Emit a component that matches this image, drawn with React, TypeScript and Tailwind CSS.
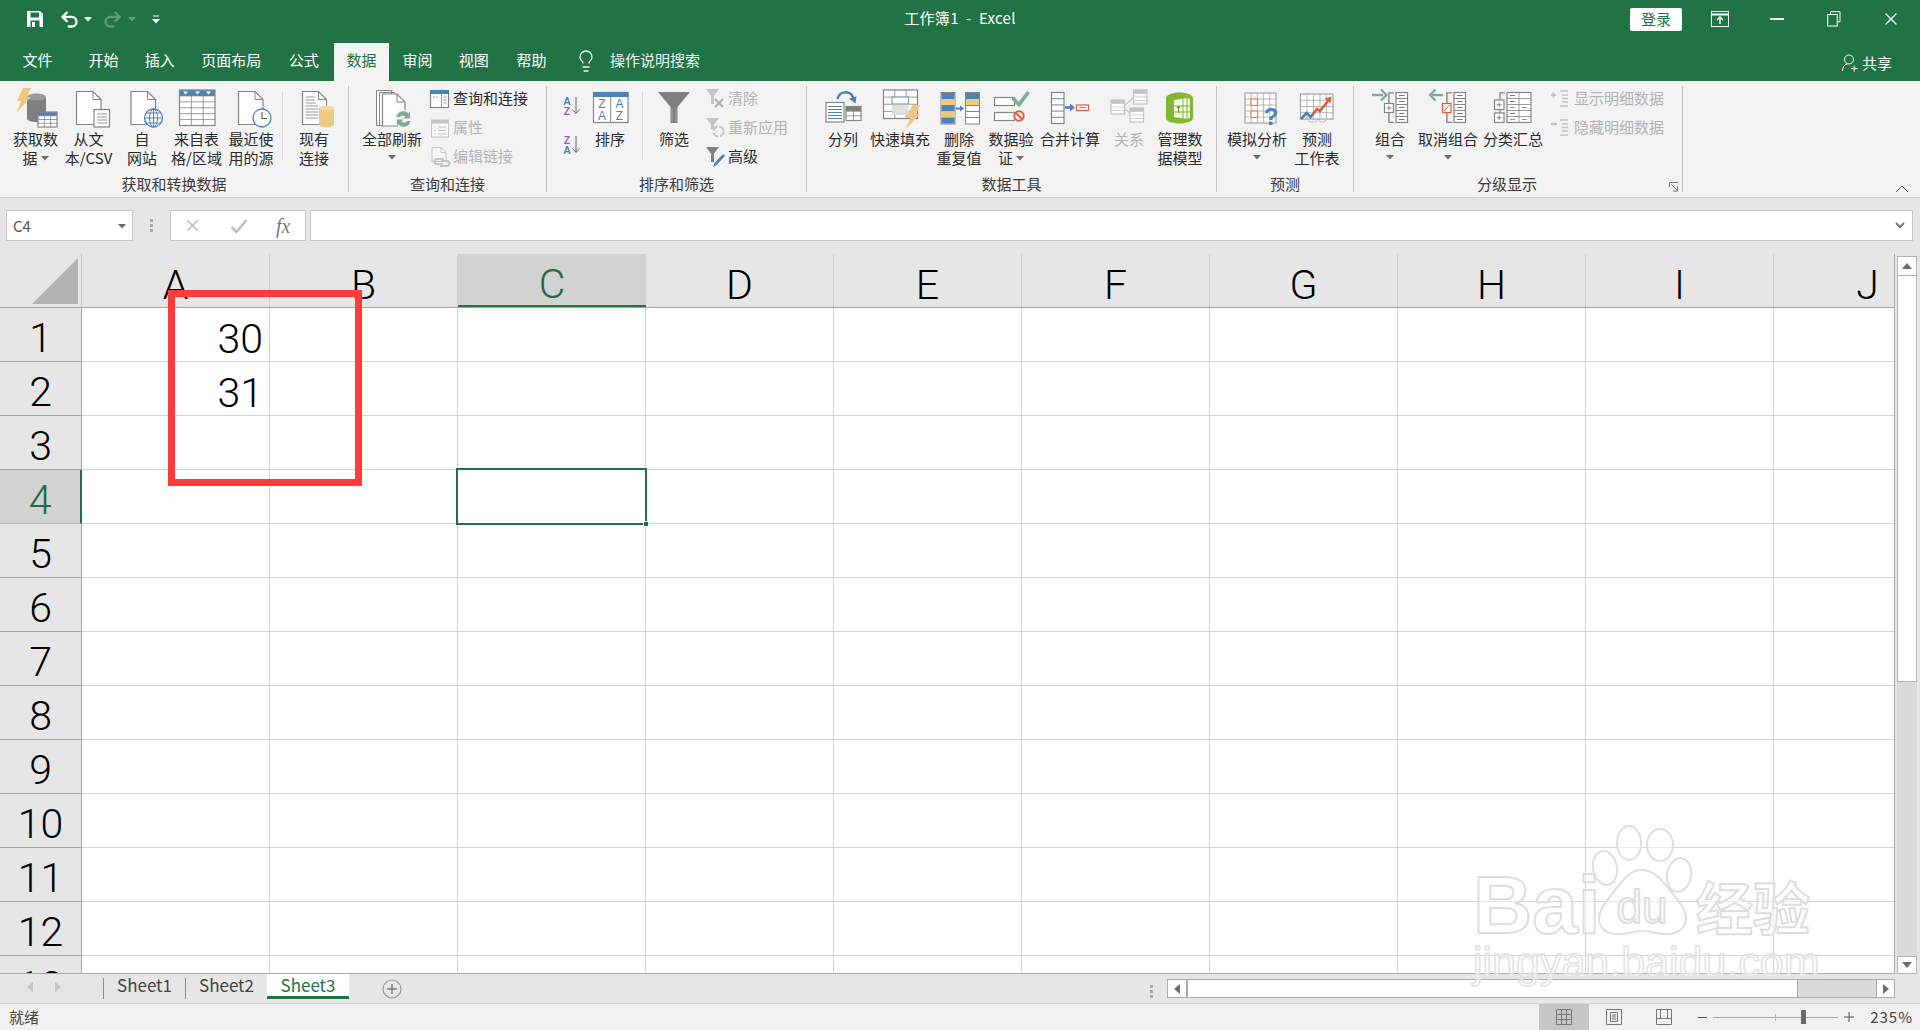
import type { ReactNode } from "react"
import { Lightbulb, Redo2, Undo2, X } from "lucide-react"

const LINE = "#858585"
const BLUE = "#4d82b8"
const GOLD = "#edc87e"
const TEAL = "#7cab96"
const RED = "#dd5f3f"
const PURPLE = "#9a5db5"
const OFF = "#c4c4c4"

const COLS = ["A", "B", "C", "D", "E", "F", "G", "H", "I", "J"]
const ROWS = [1, 2, 3, 4, 5, 6, 7, 8, 9, 10, 11, 12, 13]
const TABS = [
  { name: "文件", gap: "mr-[11px]" },
  { name: "开始", gap: "mr-[1.300px]" },
  { name: "插入", gap: "mr-[1.300px]" },
  { name: "页面布局", gap: "mr-[2.500px]" },
  { name: "公式", gap: "mr-[2.800px]" },
  { name: "数据", gap: "mr-[1px]" },
  { name: "审阅", gap: "mr-[1.300px]" },
  { name: "视图", gap: "mr-[2.600px]" },
  { name: "帮助", gap: "mr-0" },
]

/* ---------- small svg parts ---------- */

function Big({ children }: { children: ReactNode }) {
  return (
    <svg viewBox="0 0 60 44" className="h-[44px] w-[60px] flex-none" fill="none">
      {children}
    </svg>
  )
}

function Small({ children }: { children: ReactNode }) {
  return (
    <svg viewBox="0 0 22 22" className="h-[22px] w-[22px] flex-none" fill="none">
      {children}
    </svg>
  )
}

function Page({ x, y, w, h, c = LINE }: { x: number; y: number; w: number; h: number; c?: string }) {
  const f = 8
  return (
    <>
      <path d={`M${x} ${y}h${w - f}l${f} ${f}v${h - f}h-${w}z`} fill="#fff" stroke={c} strokeWidth="1.2" />
      <path d={`M${x + w - f} ${y}v${f}h${f}`} stroke={c} strokeWidth="1" />
    </>
  )
}

function Table({ x, y, w, h, cols, rows, c = LINE, head }: { x: number; y: number; w: number; h: number; cols: number; rows: number; c?: string; head?: string }) {
  const lines = []
  for (let i = 1; i < cols; i++) lines.push(<path key={"c" + i} d={`M${x + (w * i) / cols} ${y}v${h}`} stroke={c} strokeWidth=".8" />)
  for (let i = 1; i < rows; i++) lines.push(<path key={"r" + i} d={`M${x} ${y + (h * i) / rows}h${w}`} stroke={c} strokeWidth=".8" />)
  return (
    <>
      <rect x={x} y={y} width={w} height={h} fill="#fff" />
      {lines}
      {head && <rect x={x} y={y} width={w} height={h / rows} fill={head} />}
      <rect x={x} y={y} width={w} height={h} stroke={c} strokeWidth="1.2" />
    </>
  )
}

function Lines({ x, y, w, n, gap, c = "#9a9a9a" }: { x: number; y: number; w: number; n: number; gap: number; c?: string }) {
  return (
    <>
      {Array.from({ length: n }, (_, i) => (
        <path key={i} d={`M${x} ${y + i * gap}h${w}`} stroke={c} strokeWidth="1" />
      ))}
    </>
  )
}

function Bolt({ x, y, s = 1 }: { x: number; y: number; s?: number }) {
  return <path transform={`translate(${x} ${y}) scale(${s})`} d="M6 0h8L10 9h4L0 24l4-11H0z" fill={GOLD} />
}

function ListCol({ x, y }: { x: number; y: number }) {
  return (
    <>
      <rect x={x} y={y} width="11.5" height="30" fill="#fff" stroke={LINE} strokeWidth="1.2" />
      {[1, 2, 3, 4].map((i) => <path key={i} d={`M${x} ${y + i * 6}h11.5`} stroke={LINE} strokeWidth="1" />)}
      {[0, 1, 2, 3, 4].map((i) => <path key={i} d={`M${x + 3} ${y + 3 + i * 6}h5.5`} stroke={BLUE} strokeWidth="1" />)}
    </>
  )
}

/* ---------- big ribbon icons ---------- */

const IconGetData = (
  <Big>
    <path d="M21 11v21c0 2.500 4 4 9.500 4s9.500-1.500 9.500-4V11z" fill="#7f7f7f" />
    <ellipse cx="30.500" cy="11" rx="9.500" ry="3.500" fill="#9a9a9a" />
    <Bolt x={11} y={2} />
    <Table x={32} y={26} w={19} h={15} cols={3} rows={4} head={BLUE} />
  </Big>
)
const IconFromText = (
  <Big>
    <Page x={17.500} y={5.500} w={24.500} h={33} />
    <rect x="35" y="23.500" width="15.500" height="17.500" fill="#fff" stroke={LINE} strokeWidth="1.2" />
    <Lines x={38} y={28} w={10} n={4} gap={3} />
  </Big>
)
const IconWeb = (
  <Big>
    <Page x={19} y={5.500} w={24.500} h={33} />
    <circle cx="41.500" cy="32" r="9" fill="#fff" stroke={BLUE} strokeWidth="1.300" />
    <ellipse cx="41.500" cy="32" rx="4" ry="9" stroke={BLUE} />
    <path d="M32.500 32h18M34 27h15M34 37h15M41.500 23v18" stroke={BLUE} />
  </Big>
)
const IconFromTable = (
  <Big>
    <Table x={12.500} y={4} w={35.500} h={35.500} cols={3} rows={6} head={BLUE} />
    <path d="M16 5.500h5l-2.500 3zM28 5.500h5l-2.500 3zM39 5.500h5l-2.500 3z" fill="#fff" />
  </Big>
)
const IconRecent = (
  <Big>
    <Page x={17.500} y={5.500} w={24.500} h={33} />
    <circle cx="41" cy="32" r="9" fill="#fff" stroke={BLUE} strokeWidth="1.300" />
    <path d="M41 26v6.500h5" stroke="#555" strokeWidth="1.100" />
  </Big>
)
const IconExisting = (
  <Big>
    <Page x={18.500} y={5.500} w={24} h={33} />
    <Lines x={21.500} y={11} w={10} n={3} gap={3} />
    <Lines x={21.500} y={20} w={13} n={5} gap={3} />
    <path d="M35 22v16c0 2 3 3.200 7.500 3.200S50 40 50 38V22z" fill={GOLD} />
    <ellipse cx="42.500" cy="22" rx="7.500" ry="2.500" fill="#f3d9a4" />
  </Big>
)
const IconRefresh = (
  <Big>
    <path d="M14.500 4.500h15v35h-15zM17.500 6.500h15v33h-15z" fill="#fff" stroke={LINE} />
    <Page x={20.500} y={8} w={22.500} h={32} />
    <circle cx="41.500" cy="33" r="9.500" fill="#f3f3f3" />
    <path d="M34.500 31a7 7 0 0 1 12-3.500l1.500-2v7h-6.500l2-2a4.200 4.200 0 0 0-6 .5zM48.500 35a7 7 0 0 1-12 3.500l-1.500 2v-7h6.500l-2 2a4.200 4.200 0 0 0 6-.5z" fill={TEAL} />
  </Big>
)
const IconSort = (
  <Big>
    <rect x="13.500" y="6.500" width="34.500" height="30" fill="#fff" stroke={LINE} strokeWidth="1.200" />
    <rect x="13" y="6" width="35.500" height="5" fill={BLUE} />
    <path d="M30.700 11v25" stroke={LINE} />
    <text x="22" y="22" textAnchor="middle" fontSize="12" fontFamily="'Liberation Sans'" fill={PURPLE}>Z</text>
    <text x="22" y="34" textAnchor="middle" fontSize="12" fontFamily="'Liberation Sans'" fill={BLUE}>A</text>
    <text x="39.500" y="22" textAnchor="middle" fontSize="12" fontFamily="'Liberation Sans'" fill={BLUE}>A</text>
    <text x="39.500" y="34" textAnchor="middle" fontSize="12" fontFamily="'Liberation Sans'" fill={PURPLE}>Z</text>
  </Big>
)
const IconFilter = (
  <Big>
    <path d="M14 6h32L33.500 21v16h-7V21z" fill="#7f7f7f" />
    <path d="M28 22v14M32 22v14" stroke="#a5a5a5" />
  </Big>
)
const IconColumns = (
  <Big>
    <rect x="13" y="16.500" width="18" height="19.500" fill="#fff" stroke={LINE} strokeWidth="1.200" />
    <Lines x={15} y={20.500} w={14} n={5} gap={3} c={BLUE} />
    <Table x={33} y={20.500} w={15} h={14} cols={2} rows={3} head="#7f7f7f" />
    <path d="M24.500 13a8.500 8.500 0 0 1 14-4.500l2 3.500" stroke={BLUE} strokeWidth="2.400" />
    <path d="M36 12.500l6.500 5 1-7z" fill={BLUE} />
  </Big>
)
const IconFlash = (
  <Big>
    <Table x={13.500} y={4} w={34} h={28.500} cols={3} rows={4} />
    <rect x="22" y="18" width="16.500" height="11" fill="#dfdfdf" />
    <rect x="22" y="11" width="16.500" height="7" fill="#fff" stroke={TEAL} strokeWidth="1.200" />
    <Bolt x={36} y={19} s={1} />
  </Big>
)
const IconDuplicates = (
  <Big>
    <rect x="12" y="6.500" width="14" height="31.500" fill="#fff" stroke={LINE} />
    <rect x="12.500" y="7" width="13" height="6" fill={BLUE} />
    <rect x="12.500" y="13" width="13" height="6" fill={GOLD} />
    <rect x="12.500" y="19" width="13" height="6.500" fill={BLUE} />
    <rect x="12.500" y="25.500" width="13" height="6" fill={GOLD} />
    <rect x="12.500" y="31.500" width="13" height="6" fill={BLUE} />
    <rect x="36.500" y="6.500" width="14" height="31.500" fill="#fff" stroke={LINE} />
    <rect x="37" y="7" width="13" height="6" fill={BLUE} />
    <rect x="37" y="13" width="13" height="6" fill={GOLD} />
    <path d="M36.500 19.500h14M36.500 25.500h14M36.500 31.500h14" stroke={LINE} />
    <path d="M27 22.500h5" stroke={BLUE} strokeWidth="2" />
    <path d="M31 19.500l4 3-4 3z" fill={BLUE} />
  </Big>
)
const IconValidate = (
  <Big>
    <rect x="13.500" y="11.500" width="20" height="8" fill="#fff" stroke={LINE} strokeWidth="1.200" />
    <rect x="13.500" y="26.500" width="20" height="8" fill="#fff" stroke={LINE} strokeWidth="1.200" />
    <path d="M31.500 12l6.500 6.500L47.500 6" stroke={TEAL} strokeWidth="3.600" />
    <circle cx="38" cy="30" r="4.700" fill="#fff" stroke={RED} strokeWidth="2" />
    <path d="M35 27l6 6" stroke={RED} strokeWidth="2" />
  </Big>
)
const IconConsolidate = (
  <Big>
    <rect x="11.500" y="6.500" width="12.500" height="31" fill="#fff" stroke={LINE} strokeWidth="1.200" />
    <path d="M11.500 12.700h12.500M11.500 18.900h12.500M11.500 25.100h12.500M11.500 31.300h12.500" stroke={LINE} />
    <path d="M25 21.500h6" stroke={BLUE} strokeWidth="2.600" />
    <path d="M30 17.500l5 4-5 4z" fill={BLUE} />
    <rect x="36.500" y="19" width="12" height="5.500" fill="#fff" stroke={RED} strokeWidth="1.200" />
    <path d="M39 21.700h7" stroke={RED} />
  </Big>
)
const IconRelations = (
  <Big>
    <path d="M25 20l10-9M25 22l8 7" stroke={OFF} strokeWidth="1.200" />
    <Table x={12} y={14} w={13.500} h={14} cols={1} rows={4} c={OFF} head={OFF} />
    <Table x={34.500} y={4} w={13.500} h={14} cols={1} rows={4} c={OFF} head={OFF} />
    <Table x={31} y={22} w={13.500} h={14} cols={1} rows={4} c={OFF} head={OFF} />
  </Big>
)
const IconModel = (
  <Big>
    <path d="M16 12c0-3 6-5.500 13.500-5.500S43 9 43 12v20c0 3-6 5.500-13.500 5.500S16 35 16 32z" fill="#7fb82f" />
    <path d="M24 14l13-2 3 1v19l-3 1-13-2z" fill="#fff" opacity=".9" />
    <path d="M33 12.500V33M37 12v21M24 20h16M24 26h16" stroke="#7fb82f" strokeWidth="1" />
    <path d="M28.500 27v-7l-1.500 2M28.500 20l1.500 2" stroke="#5f8d20" strokeWidth="1" />
  </Big>
)
const IconWhatIf = (
  <Big>
    <Table x={18} y={7} w={31} h={30} cols={5} rows={5} c="#a3a3a3" />
    <rect x="24" y="13" width="6.500" height="6.500" fill="#fff" stroke="#e08a3c" strokeWidth="1.200" />
    <rect x="24" y="25" width="6.500" height="6.500" fill="#fff" stroke="#e08a3c" strokeWidth="1.200" />
    <text x="44" y="39" textAnchor="middle" fontSize="24" fontWeight="700" fontFamily="'Liberation Sans'" fill={BLUE}>?</text>
  </Big>
)
const IconForecast = (
  <Big>
    <Table x={13.500} y={8} w={32.500} h={25} cols={5} rows={4} c="#a3a3a3" />
    <path d="M14 33l5.500-6 4 4 3-3.500" stroke={BLUE} strokeWidth="2.600" />
    <path d="M26 28l4-5 3 2 8-10" stroke={RED} strokeWidth="2.600" />
    <path d="M37.500 12.500l7-2-1 7z" fill={RED} />
    <path d="M20 33l3 3h6l2-3M31 33l2 3h5l1-3" stroke="#a3a3a3" strokeWidth=".8" strokeDasharray="2 1" />
  </Big>
)
const IconGroup = (
  <Big>
    <path d="M12 9h11" stroke={TEAL} strokeWidth="2.400" />
    <path d="M21 3.500l5.500 5.500-5.500 5.500" stroke={TEAL} strokeWidth="2.200" />
    <path d="M34 6.800h-5v29.500h5M28.800 6.800v10.500M28.800 26.500v9.800" stroke={LINE} strokeWidth="1.200" />
    <rect x="24.500" y="17.500" width="9" height="9" fill="#fff" stroke={LINE} strokeWidth="1.200" />
    <path d="M26.500 22h5M29 19.500v5" stroke={LINE} />
    <ListCol x={36} y={6.500} />
  </Big>
)
const IconUngroup = (
  <Big>
    <path d="M14 9h11" stroke={TEAL} strokeWidth="2.400" />
    <path d="M17.500 3.500L12 9l5.500 5.500" stroke={TEAL} strokeWidth="2.200" />
    <path d="M34 6.800h-5v29.500h5M28.800 6.800v10.500M28.800 26.500v9.800" stroke={LINE} strokeWidth="1.200" />
    <rect x="24.500" y="17.500" width="8.500" height="9" fill="#fff" stroke={RED} strokeWidth="1.200" />
    <path d="M26 25l5.500-6" stroke={RED} />
    <ListCol x={36} y={6.500} />
  </Big>
)
const IconSubtotal = (
  <Big>
    <path d="M22 6.800h-5v7M17 23.500v3.500" stroke={LINE} strokeWidth="1.200" />
    <rect x="11.500" y="14" width="9.500" height="9.500" fill="#fff" stroke={LINE} strokeWidth="1.200" />
    <rect x="11.500" y="27" width="9.500" height="9.500" fill="#fff" stroke={LINE} strokeWidth="1.200" />
    <path d="M13.700 18.700h5M16.200 16.200v5M13.700 31.700h5M16.200 29.200v5" stroke={LINE} />
    <Table x={24} y={6.500} w={24} h={30} cols={2} rows={5} />
    <path d="M27 9.500h5M27 15.500h5M27 27.500h5" stroke={BLUE} />
    <path d="M27 21.500h5M39 21.500h5M27 33.500h5M39 33.500h5" stroke="#e08a3c" />
  </Big>
)

/* ---------- small ribbon icons ---------- */

const SmallQuery = (
  <Small>
    <rect x="1.500" y="2.500" width="18" height="17" fill="#fff" stroke={LINE} strokeWidth="1.200" />
    <rect x="1" y="2" width="19" height="4" fill={BLUE} />
    <path d="M12.500 6v13M14.500 9h3M14.500 12h3M14.500 15h3M4 9h2M7 9h2" stroke="#9a9a9a" />
  </Small>
)
const SmallProps = (
  <Small>
    <rect x="2.500" y="3" width="17" height="17" fill="#f7f7f7" stroke={OFF} />
    <rect x="2.500" y="3" width="17" height="3.500" fill={OFF} />
    <path d="M9 10h8M9 13.500h8M9 17h8M5 10h1.500M5 13.500h1.500M5 17h1.500" stroke={OFF} />
  </Small>
)
const SmallLinks = (
  <Small>
    <path d="M3 1.500h9l5 5v9H3z" fill="#f7f7f7" stroke={OFF} />
    <path d="M12 1.500v5h5" stroke={OFF} />
    <path d="M12 16h6a2.500 2.500 0 0 1 0 5h-7M14 19h-6a2.500 2.500 0 0 1 0-5h7" stroke={OFF} strokeWidth="2" transform="translate(0 -1)" />
  </Small>
)
const SmallClear = (
  <Small>
    <path d="M2 1h13l-5 6.500V16h-3V7.500z" fill={OFF} />
    <path d="M11 11l8 8M19 11l-8 8" stroke="#b0b0b0" strokeWidth="2.200" />
  </Small>
)
const SmallReapply = (
  <Small>
    <path d="M2 1h13l-5 6.500V12H7V7.500z" fill={OFF} />
    <circle cx="14.500" cy="14.500" r="5" stroke={OFF} strokeWidth="2" strokeDasharray="6 2" />
  </Small>
)
const SmallAdvanced = (
  <Small>
    <path d="M2 1h13l-5 6.500V16H7V7.500z" fill="#7f7f7f" />
    <path d="M9 21l1.500-4L19 8l2 2-8.500 9z" fill={BLUE} />
  </Small>
)
const SmallShow = (
  <Small>
    <path d="M1 7h5M3.500 4.500v5" stroke={OFF} strokeWidth="2" />
    <path d="M10 3h8M12 7h6M12 10.500h6M12 14h6M10 18h8" stroke={OFF} strokeWidth="1.300" />
  </Small>
)
const SmallHide = (
  <Small>
    <path d="M1 7h6" stroke={OFF} strokeWidth="2.400" />
    <path d="M10 3h8M12 7h6M12 10.500h6M12 14h6M10 18h8" stroke={OFF} strokeWidth="1.300" />
  </Small>
)

/* ---------- ribbon blocks ---------- */

function Caret({ className = "" }: { className?: string }) {
  return (
    <svg viewBox="0 0 8 5" className={`inline-block h-[5px] w-[8px] ${className}`}>
      <path d="M0 0h8L4 4.500z" fill="#6e6e6e" />
    </svg>
  )
}

function RibbonBtn({ w, icon, lines, caret, off }: { w: string; icon: ReactNode; lines: string[]; caret?: boolean; off?: boolean }) {
  return (
    <div className={`flex flex-none flex-col items-center whitespace-nowrap text-[15px] leading-[19px] ${w} ${off ? "text-[#b4b4b4]" : "text-[#2b2b2b]"}`}>
      {icon}
      <div className="-mt-[1px] flex flex-col items-center">
        {lines.map((l, i) => (
          <div key={l} className="h-[19px] text-center">
            {l}
            {caret && i === lines.length - 1 && lines.length > 1 && <Caret className="mb-[2px] ml-[3px]" />}
          </div>
        ))}
        {caret && lines.length === 1 && <div className="flex h-[19px] items-center"><Caret /></div>}
      </div>
    </div>
  )
}

function SmallBtn({ icon, label, off }: { icon: ReactNode; label: string; off?: boolean }) {
  return (
    <div className={`flex h-[29px] items-center gap-[2px] whitespace-nowrap text-[15px] ${off ? "text-[#b4b4b4]" : "text-[#2b2b2b]"}`}>
      {icon}
      <span>{label}</span>
    </div>
  )
}

function Group({ w, label, labelPad = "", children }: { w: string; label: string; labelPad?: string; children: ReactNode }) {
  return (
    <div className={`flex h-[106px] flex-none flex-col border-r border-[#c6c6c6] ${w}`}>
      <div className="flex h-[89px] flex-none items-start">{children}</div>
      <div className={`h-[18px] flex-none whitespace-nowrap text-center text-[15px] leading-[18px] text-[#3c3c3c] ${labelPad}`}>{label}</div>
    </div>
  )
}

function VSep({ className }: { className: string }) {
  return <div className={`h-[68px] w-px flex-none bg-[#d4d4d4] ${className}`} />
}

function Ribbon() {
  return (
    <div className="relative flex h-[117px] border-b border-[#d4d4d4] bg-[#f3f3f3] pt-[5px]">
      <Group w="w-[349px]" label="获取和转换数据">
        <div className="w-[9px] flex-none" />
        <RibbonBtn w="w-[53px]" icon={IconGetData} lines={["获取数", "据"]} caret />
        <RibbonBtn w="w-[53px]" icon={IconFromText} lines={["从文", "本/CSV"]} />
        <RibbonBtn w="w-[54px]" icon={IconWeb} lines={["自", "网站"]} />
        <RibbonBtn w="w-[55px]" icon={IconFromTable} lines={["来自表", "格/区域"]} />
        <RibbonBtn w="w-[54px]" icon={IconRecent} lines={["最近使", "用的源"]} />
        <VSep className="ml-[4px] mt-[6px]" />
        <RibbonBtn w="w-[56px] ml-[3px]" icon={IconExisting} lines={["现有", "连接"]} />
      </Group>

      <Group w="w-[198px]" label="查询和连接">
        <div className="w-[13px] flex-none" />
        <RibbonBtn w="w-[60px]" icon={IconRefresh} lines={["全部刷新"]} caret />
        <div className="ml-[7px] flex -mt-[2px] flex-col">
          <SmallBtn icon={SmallQuery} label="查询和连接" />
          <SmallBtn icon={SmallProps} label="属性" off />
          <SmallBtn icon={SmallLinks} label="编辑链接" off />
        </div>
      </Group>

      <Group w="w-[260px]" label="排序和筛选">
        <div className="ml-[12px] flex w-[24px] flex-none flex-col items-center pt-[10px]">
          <svg viewBox="0 0 20 20" className="h-[20px] w-[20px]">
            <text x="6" y="9" textAnchor="middle" fontSize="10.500" fontWeight="700" fontFamily="'Liberation Sans'" fill={BLUE}>A</text>
            <text x="6" y="18.500" textAnchor="middle" fontSize="10.500" fontWeight="700" fontFamily="'Liberation Sans'" fill={PURPLE}>Z</text>
            <path d="M15 1v16M11.500 13.500L15 17.500l3.500-4" stroke="#666" fill="none" />
          </svg>
          <svg viewBox="0 0 20 20" className="mt-[19px] h-[20px] w-[20px]">
            <text x="6" y="9" textAnchor="middle" fontSize="10.500" fontWeight="700" fontFamily="'Liberation Sans'" fill={PURPLE}>Z</text>
            <text x="6" y="18.500" textAnchor="middle" fontSize="10.500" fontWeight="700" fontFamily="'Liberation Sans'" fill={BLUE}>A</text>
            <path d="M15 1v16M11.500 13.500L15 17.500l3.500-4" stroke="#666" fill="none" />
          </svg>
        </div>
        <RibbonBtn w="w-[40px] ml-[7px]" icon={IconSort} lines={["排序"]} />
        <VSep className="ml-[12px] mt-[6px]" />
        <RibbonBtn w="w-[40px] ml-[11px]" icon={IconFilter} lines={["筛选"]} />
        <div className="ml-[10px] flex -mt-[2px] flex-col">
          <SmallBtn icon={SmallClear} label="清除" off />
          <SmallBtn icon={SmallReapply} label="重新应用" off />
          <SmallBtn icon={SmallAdvanced} label="高级" />
        </div>
      </Group>

      <Group w="w-[410px]" label="数据工具">
        <div className="w-[12px] flex-none" />
        <RibbonBtn w="w-[48px]" icon={IconColumns} lines={["分列"]} />
        <RibbonBtn w="w-[66px]" icon={IconFlash} lines={["快速填充"]} />
        <RibbonBtn w="w-[52px]" icon={IconDuplicates} lines={["删除", "重复值"]} />
        <RibbonBtn w="w-[52px]" icon={IconValidate} lines={["数据验", "证"]} caret />
        <RibbonBtn w="w-[66px]" icon={IconConsolidate} lines={["合并计算"]} />
        <RibbonBtn w="w-[52px]" icon={IconRelations} lines={["关系"]} off />
        <RibbonBtn w="w-[50px]" icon={IconModel} lines={["管理数", "据模型"]} />
      </Group>

      <Group w="w-[137px]" label="预测">
        <div className="w-[10px] flex-none" />
        <RibbonBtn w="w-[60px]" icon={IconWhatIf} lines={["模拟分析"]} caret />
        <RibbonBtn w="w-[60px]" icon={IconForecast} lines={["预测", "工作表"]} />
      </Group>

      <Group w="w-[329px]" label="分级显示" labelPad="pr-[22px]">
        <div className="w-[7px] flex-none" />
        <RibbonBtn w="w-[58px]" icon={IconGroup} lines={["组合"]} caret />
        <RibbonBtn w="w-[58px]" icon={IconUngroup} lines={["取消组合"]} caret />
        <RibbonBtn w="w-[72px]" icon={IconSubtotal} lines={["分类汇总"]} />
        <div className="ml-[1px] flex -mt-[2px] flex-col">
          <SmallBtn icon={SmallShow} label="显示明细数据" off />
          <SmallBtn icon={SmallHide} label="隐藏明细数据" off />
        </div>
      </Group>

      <svg viewBox="0 0 10 10" className="absolute left-[1669px] top-[101px] h-[10px] w-[10px]" fill="none">
        <path d="M.5 5V.500H9M2.500 2.500l5.500 5.500M8.500 4v5H4" stroke="#777" />
      </svg>
      <svg viewBox="0 0 14 8" className="absolute left-[1895px] top-[104px] h-[8px] w-[14px]" fill="none">
        <path d="M1 7l6-6 6 6" stroke="#666" />
      </svg>
    </div>
  )
}

function TitleBar() {
  return (
    <div className="flex h-[43px] items-start bg-[#217346] text-white">
      <div className="flex h-[38px] flex-1 items-center">
        <div className="w-[26px] flex-none" />
        <svg viewBox="0 0 18 18" className="h-[18px] w-[18px]">
          <path d="M1 1h13l3 3v13H1z" fill="#fff" />
          <rect x="4.500" y="2.500" width="8.500" height="5" fill="#217346" />
          <rect x="4.500" y="10.500" width="9" height="6.500" fill="#217346" />
          <rect x="6" y="12" width="3" height="5" fill="#fff" />
        </svg>
        <Undo2 size={21} strokeWidth={2.6} className="ml-[15px]" />
        <Caret className="ml-[4px] [&_path]:fill-white" />
        <Redo2 size={21} strokeWidth={2.6} className="ml-[10px] text-[#5f9a7e]" />
        <Caret className="ml-[5px] [&_path]:fill-[#5f9a7e]" />
        <svg viewBox="0 0 8 9" className="ml-[16px] h-[9px] w-[8px]">
          <path d="M1 1h6" stroke="#fff" />
          <path d="M0 4h8L4 8.500z" fill="#fff" />
        </svg>
      </div>
      <div className="flex h-[36px] items-center text-[15px] tracking-[0.3px]">工作簿1&nbsp;&nbsp;-&nbsp;&nbsp;Excel</div>
      <div className="flex h-[38px] flex-1 items-center justify-end">
        <div className="flex h-[23px] w-[52px] flex-none items-center justify-center rounded-[2px] bg-white text-[15px] text-[#217346]">登录</div>
        <svg viewBox="0 0 18 16" className="ml-[29px] h-[16px] w-[18px] flex-none" fill="none">
          <rect x=".5" y=".5" width="17" height="15" stroke="#fff" />
          <path d="M.5 3.500h17" stroke="#fff" strokeWidth="2" />
          <path d="M9 13V6.500M6 9l3-3 3 3" stroke="#fff" strokeWidth="1.400" />
        </svg>
        <div className="ml-[41px] h-[1.500px] w-[14px] flex-none bg-white" />
        <svg viewBox="0 0 14 16" className="ml-[43px] h-[16px] w-[14px] flex-none" fill="none">
          <path d="M3.500 3V.700H13v10h-3" stroke="#fff" />
          <rect x=".7" y="3.500" width="9.500" height="11.500" stroke="#fff" />
        </svg>
        <X size={20} strokeWidth={1.5} className="ml-[40px] mr-[19px] flex-none" />
      </div>
    </div>
  )
}

function TabRow() {
  return (
    <div className="flex h-[38px] items-stretch bg-[#217346] text-[15px] text-white">
      <div className="w-[10px] flex-none" />
      {TABS.map((t) => (
        <div
          key={t.name}
          className={`flex items-center justify-center px-[12.500px] pb-[4px] ${t.gap} ${t.name === "数据" ? "bg-[#f3f3f3] text-[#217346]" : ""}`}
        >
          {t.name}
        </div>
      ))}
      <div className="ml-[15px] flex items-center gap-[12px] pb-[3px] text-[#eef5f1]">
        <Lightbulb size={24} strokeWidth={1.3} />
        <span>操作说明搜索</span>
      </div>
      <div className="flex-1" />
      <div className="mr-[28px] flex items-center gap-[4px] pt-[2px]">
        <svg viewBox="0 0 16 18" className="h-[18px] w-[16px]" fill="none">
          <circle cx="7" cy="5.500" r="4.500" stroke="#fff" />
          <path d="M.5 17c0-4 2-6.500 4.500-6.800M9 14.500h6.500M12.200 11.500v6" stroke="#fff" />
        </svg>
        <span>共享</span>
      </div>
    </div>
  )
}

function FormulaBar() {
  return (
    <div className="flex h-[56px] items-start bg-[#e6e6e6] pl-[6px] pt-[12px]">
      <div className="flex h-[31px] w-[127px] items-center justify-between border border-[#c6c6c6] bg-white pl-[6px] pr-[6px] pt-[1px] text-[15px] text-[#555]">
        C4
        <Caret />
      </div>
      <div className="flex h-[31px] w-[37px] flex-none flex-col items-center justify-center gap-[2px]">
        <div className="h-[3px] w-[3px] bg-[#a8a8a8]" />
        <div className="h-[3px] w-[3px] bg-[#a8a8a8]" />
        <div className="h-[3px] w-[3px] bg-[#a8a8a8]" />
      </div>
      <div className="flex h-[31px] w-[136px] items-center border border-[#c6c6c6] bg-white">
        <X size={19} strokeWidth={1.8} className="ml-[12px] text-[#b8b8b8]" />
        <svg viewBox="0 0 18 16" className="ml-[28px] h-[16px] w-[18px]" fill="none">
          <path d="M1.500 9l5 5L16.500 2" stroke="#bcbcbc" strokeWidth="2.400" />
        </svg>
        <span className="ml-[28px] font-['Liberation_Serif',serif] text-[20px] italic text-[#777]">fx</span>
      </div>
      <div className="ml-[4px] flex h-[31px] w-[1603px] items-center justify-end border border-[#c6c6c6] bg-white pr-[7px]">
        <svg viewBox="0 0 10 7" className="h-[7px] w-[10px]" fill="none">
          <path d="M1 1l4 4 4-4" stroke="#777" strokeWidth="2" />
        </svg>
      </div>
    </div>
  )
}

/* ---------- sheet ---------- */

function Sheet() {
  return (
    <div className="h-[720px] w-[1895px] flex-none overflow-hidden border-b border-r border-[#ababab] bg-white font-['Roboto','Noto_Sans_CJK_SC',sans-serif] text-[41px] font-light">
      <div className="flex h-[54px] border-b border-[#a0a0a0] bg-[#e6e6e6]">
        <div className="flex h-full w-[82px] flex-none items-end justify-end border-r border-[#c9c9c9] pb-[3px] pr-[3px]">
          <svg viewBox="0 0 46 46" className="h-[46px] w-[46px]">
            <path d="M46 0v46H0z" fill="#b4b4b4" />
          </svg>
        </div>
        {COLS.map((c) => (
          <div
            key={c}
            className={`flex h-full w-[188px] flex-none items-center justify-center pt-[9px] leading-none ${c === "C" ? "h-[54px] border-b-2 border-[#217346] bg-[#d2d2d2] text-[#1f6b42]" : "border-r border-[#cfcfcf] text-black"}`}
          >
            {c}
          </div>
        ))}
      </div>
      {ROWS.map((r) => (
        <div key={r} className="flex h-[54px]">
          <div className={`flex w-[82px] flex-none items-center justify-center border-b pt-[8px] leading-none ${r === 4 ? "border-r-2 border-b-[#b5b5b5] border-r-[#217346] bg-[#d2d2d2] text-[#1f6b42]" : "border-r border-[#a8a8a8] bg-[#e6e6e6] text-black"}`}>
            {r}
          </div>
          {COLS.map((c) => (
            <div key={c} className="flex h-full w-[188px] flex-none items-center justify-end border-b border-r border-[#d4d4d4] pr-[6px] pt-[10px] leading-none text-black">
              {c === "A" && r === 1 ? "30" : c === "A" && r === 2 ? "31" : ""}
            </div>
          ))}
        </div>
      ))}
    </div>
  )
}

function VScroll() {
  return (
    <div className="ml-[2px] flex h-[718px] w-[20px] flex-none flex-col self-end bg-[#dadada]">
      <div className="flex h-[20px] flex-none items-center justify-center border border-[#b4b4b4] bg-white">
        <svg viewBox="0 0 10 6" className="h-[6px] w-[10px]"><path d="M0 6h10L5 0z" fill="#6e6e6e" /></svg>
      </div>
      <div className="h-[406px] flex-none border border-t-0 border-[#b4b4b4] bg-white" />
      <div className="flex-1" />
      <div className="flex h-[18px] flex-none items-center justify-center border border-[#b4b4b4] bg-white">
        <svg viewBox="0 0 10 6" className="h-[6px] w-[10px]"><path d="M0 0h10L5 6z" fill="#6e6e6e" /></svg>
      </div>
    </div>
  )
}

function SheetTabs() {
  return (
    <div className="flex h-[29px] items-start bg-[#e6e6e6] font-['Noto_Sans_CJK_SC',sans-serif] text-[17px] text-[#444]">
      <div className="flex h-[25px] w-[103px] flex-none items-center gap-[22px] pl-[27px]">
        <svg viewBox="0 0 6 10" className="h-[10px] w-[6px]"><path d="M6 0v10L0 5z" fill="#c4c4c4" /></svg>
        <svg viewBox="0 0 6 10" className="h-[10px] w-[6px]"><path d="M0 0v10l6-5z" fill="#c4c4c4" /></svg>
      </div>
      <div className="mt-[4px] flex h-[21px] w-[82px] flex-none items-center justify-center border-l border-[#8f8f8f] pb-[7px]">Sheet1</div>
      <div className="mt-[4px] flex h-[21px] w-[82px] flex-none items-center justify-center border-l border-[#8f8f8f] pb-[7px]">Sheet2</div>
      <div className="flex h-[25px] w-[82px] flex-none items-center justify-center border-b-[3px] border-[#217346] bg-white pb-[1px] text-[#217346]">Sheet3</div>
      <svg viewBox="0 0 20 20" className="ml-[33px] mt-[5px] h-[20px] w-[20px]" fill="none">
        <circle cx="10" cy="10" r="9" stroke="#9a9a9a" strokeWidth="1.200" />
        <path d="M10 5v10M5 10h10" stroke="#808080" strokeWidth="1.600" />
      </svg>
      <div className="mt-[11px] ml-[748px] flex w-[4px] flex-none flex-col gap-[2px]">
        <div className="h-[3px] w-[3px] bg-[#a8a8a8]" />
        <div className="h-[3px] w-[3px] bg-[#a8a8a8]" />
        <div className="h-[3px] w-[3px] bg-[#a8a8a8]" />
      </div>
      <div className="ml-[13px] mt-[5px] flex h-[19px] w-[728px] flex-none border border-[#ababab] bg-[#dadada]">
        <div className="flex w-[20px] flex-none items-center justify-center border-r-2 border-[#ababab] bg-white">
          <svg viewBox="0 0 6 10" className="h-[10px] w-[6px]"><path d="M6 0v10L0 5z" fill="#6e6e6e" /></svg>
        </div>
        <div className="w-[610px] flex-none border-r border-[#ababab] bg-white" />
        <div className="flex-1" />
        <div className="flex w-[18px] flex-none items-center justify-center border-l border-[#ababab] bg-white">
          <svg viewBox="0 0 6 10" className="h-[10px] w-[6px]"><path d="M0 0v10l6-5z" fill="#6e6e6e" /></svg>
        </div>
      </div>
    </div>
  )
}

function StatusBar() {
  return (
    <div className="flex h-[27px] items-center border-t border-[#d4d4d4] bg-[#f1f1f1] pl-[9px] text-[15px] text-[#444]">
      <span>就绪</span>
      <div className="flex-1" />
      <div className="flex h-full w-[50px] items-center justify-center bg-[#c6c6c6]">
        <svg viewBox="0 0 16 16" className="h-[16px] w-[16px]" fill="none">
          <path d="M.5.5h15v15H.5zM.5 5.500h15M.5 10.500h15M5.500.5v15M10.500.5v15" stroke="#777" />
        </svg>
      </div>
      <div className="flex h-full w-[50px] items-center justify-center">
        <svg viewBox="0 0 16 16" className="h-[16px] w-[16px]" fill="none">
          <path d="M.5.5h15v15H.5zM4.500 3.500h7v9h-7zM6 6h4M6 8h4M6 10h4" stroke="#777" />
        </svg>
      </div>
      <div className="flex h-full w-[50px] items-center justify-center">
        <svg viewBox="0 0 16 16" className="h-[16px] w-[16px]" fill="none">
          <path d="M.5.5h15v15H.5zM.5 9.500h15M4.500.5v9M11.500.5v9" stroke="#777" />
        </svg>
      </div>
      <div className="flex w-[24px] flex-none justify-center pl-[2px]"><div className="h-px w-[9px] bg-[#555]" /></div>
      <div className="relative h-[14px] w-[125px] flex-none">
        <div className="absolute left-0 right-0 top-[7px] h-px bg-[#a8a8a8]" />
        <div className="absolute left-[62px] top-[4px] h-[7px] w-px bg-[#b8b8b8]" />
        <div className="absolute left-[88px] top-0 h-[14px] w-[5px] bg-[#6a6a6a]" />
      </div>
      <div className="flex w-[22px] flex-none justify-center">
        <svg viewBox="0 0 10 10" className="h-[10px] w-[10px]"><path d="M5 0v10M0 5h10" stroke="#555" /></svg>
      </div>
      <span className="ml-[10px] mr-[7px] tracking-[1px]">235%</span>
    </div>
  )
}

/* red box drawn over the sheet, selected cell and the baidu stamp */

function Overlays() {
  return (
    <>
      <div className="absolute left-[456px] top-[468px] h-[57px] w-[191px] border-2 border-[#217346]" />
      <div className="absolute left-[643px] top-[521px] h-[6px] w-[6px] border border-white bg-[#217346]" />
      <div className="absolute left-[168px] top-[290px] h-[196px] w-[194px] border-[7px] border-[#ff3b3b]" />
      <div className="absolute left-[1470px] top-[824px] h-[170px] w-[350px] font-['Liberation_Sans',sans-serif]">
        <svg viewBox="0 0 350 170" className="h-[170px] w-[350px]" fill="none">
          <g stroke="#dedede" strokeWidth="2" fill="#fff" fillOpacity=".5">
            <ellipse cx="159" cy="19" rx="12" ry="17" />
            <ellipse cx="190" cy="21" rx="13" ry="16" />
            <ellipse cx="135" cy="44" rx="12" ry="17" transform="rotate(-10 135 44)" />
            <ellipse cx="209" cy="51" rx="12" ry="17" transform="rotate(10 209 51)" />
            <path d="M172 46c-14 0-22 14-30 24-6 8-13 15-13 24 0 12 10 17 21 16 8 0 14-3 22-3s14 3 22 3c11 1 22-4 22-16 0-9-7-16-13-24-8-10-17-24-31-24z" />
            <text x="3" y="109" fontSize="82" fontWeight="700" fontFamily="'Liberation Sans'">Bai</text>
            <text x="172" y="99" textAnchor="middle" fontSize="46" fontFamily="'Liberation Sans'">du</text>
            <text x="226" y="106" fontSize="57" fontWeight="700" fontFamily="'Noto Sans CJK SC'">经验</text>
          </g>
          <text x="3" y="153" fontSize="43" fontFamily="'Liberation Sans'" stroke="#e2e2e2" strokeWidth="1.500" fill="#fff" fillOpacity=".5">jingyan.baidu.com</text>
        </svg>
      </div>
    </>
  )
}

export default function App() {
  return (
    <div className="relative h-[1030px] w-[1920px] overflow-hidden bg-[#e6e6e6] font-['Noto_Sans_CJK_SC','Liberation_Sans',sans-serif]">
      <TitleBar />
      <TabRow />
      <Ribbon />
      <FormulaBar />
      <div className="flex h-[720px]">
        <Sheet />
        <VScroll />
      </div>
      <SheetTabs />
      <StatusBar />
      <Overlays />
    </div>
  )
}
